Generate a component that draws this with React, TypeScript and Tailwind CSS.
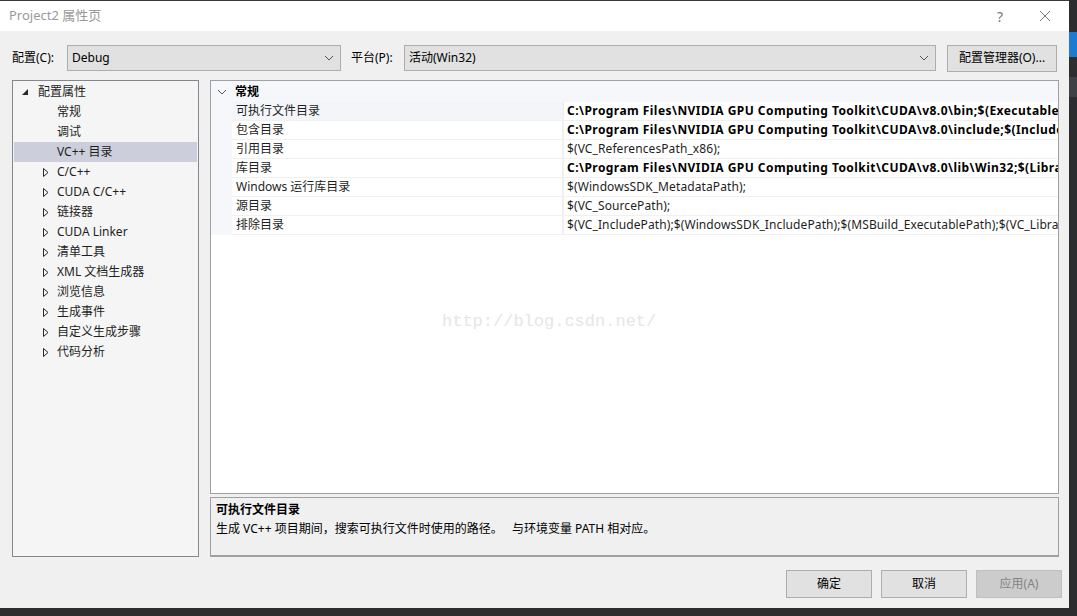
import React from 'react';

const ui = { fontFamily: '"Segoe UI", "Noto Sans", "Noto Sans CJK SC", sans-serif' };

interface TreeItem {
  label: string;
  level: 0 | 1;
  expander?: 'open' | 'closed';
  selected?: boolean;
}

const treeItems: TreeItem[] = [
  { label: '配置属性', level: 0, expander: 'open' },
  { label: '常规', level: 1 },
  { label: '调试', level: 1 },
  { label: 'VC++ 目录', level: 1, selected: true },
  { label: 'C/C++', level: 1, expander: 'closed' },
  { label: 'CUDA C/C++', level: 1, expander: 'closed' },
  { label: '链接器', level: 1, expander: 'closed' },
  { label: 'CUDA Linker', level: 1, expander: 'closed' },
  { label: '清单工具', level: 1, expander: 'closed' },
  { label: 'XML 文档生成器', level: 1, expander: 'closed' },
  { label: '浏览信息', level: 1, expander: 'closed' },
  { label: '生成事件', level: 1, expander: 'closed' },
  { label: '自定义生成步骤', level: 1, expander: 'closed' },
  { label: '代码分析', level: 1, expander: 'closed' },
];

interface Prop {
  name: string;
  value: string;
  bold?: boolean;
}

const props: Prop[] = [
  { name: '可执行文件目录', value: 'C:\\Program Files\\NVIDIA GPU Computing Toolkit\\CUDA\\v8.0\\bin;$(ExecutablePath)', bold: true },
  { name: '包含目录', value: 'C:\\Program Files\\NVIDIA GPU Computing Toolkit\\CUDA\\v8.0\\include;$(IncludePath)', bold: true },
  { name: '引用目录', value: '$(VC_ReferencesPath_x86);' },
  { name: '库目录', value: 'C:\\Program Files\\NVIDIA GPU Computing Toolkit\\CUDA\\v8.0\\lib\\Win32;$(LibraryPath)', bold: true },
  { name: 'Windows 运行库目录', value: '$(WindowsSDK_MetadataPath);' },
  { name: '源目录', value: '$(VC_SourcePath);' },
  { name: '排除目录', value: '$(VC_IncludePath);$(WindowsSDK_IncludePath);$(MSBuild_ExecutablePath);$(VC_LibraryPath)' },
];

const Chevron = () => (
  <svg width="10" height="6" viewBox="0 0 10 6" className="shrink-0">
    <path d="M1 1 L5 5 L9 1" fill="none" stroke="#555" strokeWidth="1" />
  </svg>
);

const Combo = ({ value, className }: { value: string; className: string }) => (
  <div className={`h-[26px] border border-[#adadad] bg-[#e1e1e1] flex items-center justify-between pl-[4px] pr-[6px] ${className}`}>
    <span className="text-[12px] text-black">{value}</span>
    <Chevron />
  </div>
);

const Button = ({ label, disabled }: { label: string; disabled?: boolean }) => (
  <div
    className={`w-[86px] h-[28px] flex items-center justify-center text-[12px] border ${
      disabled ? 'bg-[#cccccc] border-[#bfbfbf] text-[#838383]' : 'bg-[#e1e1e1] border-[#adadad] text-black'
    }`}
  >
    {label}
  </div>
);

export default function App() {
  return (
    <div className="w-[1077px] h-[616px] bg-[#2d2d30] flex overflow-hidden" style={ui}>
      <div className="w-[1069px] h-[608px] flex flex-col bg-[#f0f0f0] relative">
        {/* title bar */}
        <div className="h-[31px] bg-white border-t border-[#3a3a3a] flex items-center pl-[9px] shrink-0">
          <span className="text-[13px] text-[#999999] flex-1">Project2 属性页</span>
          <span className="text-[14px] text-[#777] w-[20px] text-center mr-[29px]">?</span>
          <svg width="12" height="12" viewBox="0 0 12 12" className="mr-[18px]">
            <path d="M1 1 L11 11 M11 1 L1 11" stroke="#777" strokeWidth="1" />
          </svg>
        </div>

        {/* config row */}
        <div className="flex items-center pl-[12px] pt-[14px] h-[40px] shrink-0">
          <span className="text-[12px] w-[55px]">配置(C):</span>
          <Combo value="Debug" className="w-[274px]" />
          <span className="text-[12px] ml-[10px] w-[53px]">平台(P):</span>
          <Combo value="活动(Win32)" className="w-[532px]" />
          <div className="ml-[11px] w-[110px] h-[27px] border border-[#adadad] bg-[#e1e1e1] flex items-center justify-center text-[12px]">
            配置管理器(O)...
          </div>
        </div>

        {/* main */}
        <div className="flex pl-[12px] pt-[9px] h-[486px] shrink-0">
          {/* tree */}
          <div className="w-[187px] h-[477px] border border-[#828790] bg-[#f5f5f5] pt-[1px] px-[1px]">
            {treeItems.map(item => (
              <div
                key={item.label}
                className={`h-[20px] flex items-center text-[12px] text-[#1e1e1e] ${item.selected ? 'bg-[#cccedb]' : ''}`}
              >
                <div className={`${item.level === 0 ? 'w-[24px] pl-[8px]' : 'w-[43px] pl-[29px]'} flex items-center`}>
                  {item.expander === 'open' && (
                    <svg width="7" height="7" viewBox="0 0 7 7">
                      <path d="M6 0 L6 6 L0 6 Z" fill="#262626" />
                    </svg>
                  )}
                  {item.expander === 'closed' && (
                    <svg width="6" height="9" viewBox="0 0 6 9">
                      <path d="M0.5 0.5 L5 4.5 L0.5 8.5 Z" fill="none" stroke="#262626" strokeWidth="1" />
                    </svg>
                  )}
                </div>
                <span>{item.label}</span>
              </div>
            ))}
          </div>

          {/* right side */}
          <div className="ml-[11px] w-[849px] flex flex-col">
            <div className="h-[415px] border border-[#a0a0a0] bg-white overflow-hidden">
              <div className="h-[21px] bg-[#f5f7fb] flex items-center">
                <div className="w-[21px] flex justify-center pl-[1px]">
                  <Chevron />
                </div>
                <span className="text-[12px] font-bold ml-[3px]">常规</span>
              </div>
              <div className="flex">
                <div className="w-[21px] bg-[#f5f7fb] shrink-0" />
                <div className="flex-1 min-w-0">
                  {props.map((p, i) => (
                    <div key={p.name} className="h-[19px] flex border-b border-[#f0f0f0]">
                      <div
                        className={`w-[332px] shrink-0 flex items-center pl-[4px] text-[12px] text-[#1e1e1e] border-r-2 border-[#f0f0f0] ${
                          i === 0 ? 'bg-[#f3f5f9]' : ''
                        }`}
                      >
                        {p.name}
                      </div>
                      <div
                        className={`flex-1 min-w-0 flex items-center pl-[3px] text-[12px] whitespace-nowrap overflow-hidden text-[#1e1e1e] ${
                          p.bold ? 'font-bold text-black tracking-[0.45px]' : 'tracking-[0.1px]'
                        }`}
                      >
                        {p.value}
                      </div>
                    </div>
                  ))}
                </div>
              </div>
            </div>

            <div className="mt-[3px] h-[60px] border border-[#a0a0a0] border-b-2 bg-[#f0f0f0] px-[5px] pt-[3px]">
              <div className="text-[12px] font-bold leading-[18px]">可执行文件目录</div>
              <div className="text-[12px] leading-[19px] whitespace-pre">生成 VC++ 项目期间，搜索可执行文件时使用的路径。   与环境变量 PATH 相对应。</div>
            </div>
          </div>
        </div>

        {/* buttons */}
        <div className="flex justify-end gap-[9px] pr-[7px] pt-[13px]">
          <Button label="确定" />
          <Button label="取消" />
          <Button label="应用(A)" disabled />
        </div>

        {/* watermark */}
        <div
          className="absolute left-[442px] top-[309px] text-[17px] text-[#e6e6e6] pointer-events-none"
          style={{ fontFamily: '"Liberation Mono", monospace' }}
        >
          http://blog.csdn.net/
        </div>
      </div>
      <div className="flex-1 flex flex-col pt-[32px]">
        <div className="h-[25px] bg-[#1c7ad0]" />
        <div className="h-[20px]" />
        <div className="h-[20px] bg-[#3f3f46]" />
      </div>
    </div>
  );
}
